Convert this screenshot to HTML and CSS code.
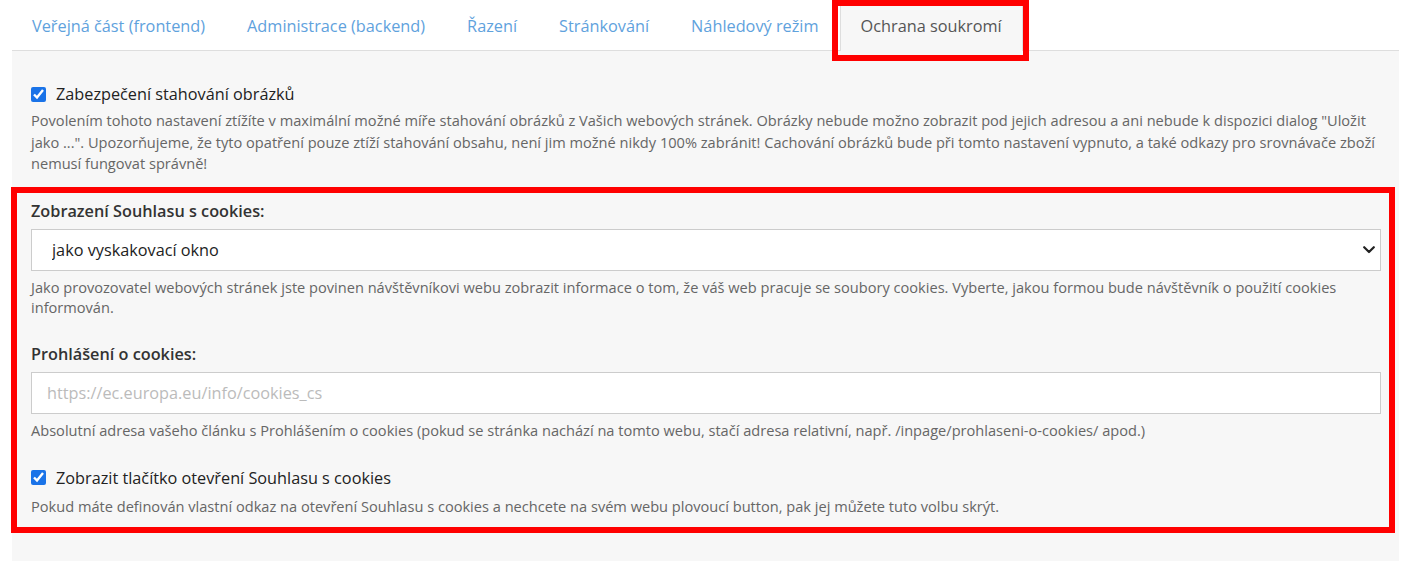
FILE: index.html
```html
<!DOCTYPE html>
<html lang="cs">
<head>
<meta charset="utf-8">
<title>Ochrana soukromí</title>
<link rel="stylesheet" href="styles.css">
</head>
<body>
<div class="page">
  <ul class="tabs">
    <li class="tab"><a href="#">Veřejná část (frontend)</a></li>
    <li class="tab"><a href="#">Administrace (backend)</a></li>
    <li class="tab"><a href="#">Řazení</a></li>
    <li class="tab"><a href="#">Stránkování</a></li>
    <li class="tab"><a href="#">Náhledový režim</a></li>
    <li class="tab active"><a href="#">Ochrana soukromí</a></li>
  </ul>
  <div class="panel">
    <label class="check-row">
      <input type="checkbox" class="check" checked>
      <span>Zabezpečení stahování obrázků</span>
    </label>
    <p class="desc">Povolením tohoto nastavení ztížíte v maximální možné míře stahování obrázků z Vašich webových stránek. Obrázky nebude možno zobrazit pod jejich adresou a ani nebude k dispozici dialog "Uložit jako ...". Upozorňujeme, že tyto opatření pouze ztíží stahování obsahu, není jim možné nikdy 100% zabránit! Cachování obrázků bude při tomto nastavení vypnuto, a také odkazy pro srovnávače zboží nemusí fungovat správně!</p>

    <div class="group">
      <label class="field-label" for="mode">Zobrazení Souhlasu s cookies:</label>
      <div class="select-wrap">
        <select id="mode" class="control select">
          <option>jako vyskakovací okno</option>
        </select>
        <svg class="chevron" width="12" height="8" viewBox="0 0 12 8"><path d="M1.2 1.2 L6 6 L10.8 1.2" fill="none" stroke="#222" stroke-width="2.2" stroke-linecap="round" stroke-linejoin="round"/></svg>
      </div>
      <p class="help">Jako provozovatel webových stránek jste povinen návštěvníkovi webu zobrazit informace o tom, že váš web pracuje se soubory cookies. Vyberte, jakou formou bude návštěvník o použití cookies informován.</p>
    </div>

    <div class="group">
      <label class="field-label" for="url">Prohlášení o cookies:</label>
      <input id="url" class="control" type="text" placeholder="https://ec.europa.eu/info/cookies_cs">
      <p class="help">Absolutní adresa vašeho článku s Prohlášením o cookies (pokud se stránka nachází na tomto webu, stačí adresa relativní, např. /inpage/prohlaseni-o-cookies/ apod.)</p>
    </div>

    <div class="group">
      <label class="check-row">
        <input type="checkbox" class="check" checked>
        <span>Zobrazit tlačítko otevření Souhlasu s cookies</span>
      </label>
      <p class="help">Pokud máte definován vlastní odkaz na otevření Souhlasu s cookies a nechcete na svém webu plovoucí button, pak jej můžete tuto volbu skrýt.</p>
    </div>
  </div>
</div>
<div class="mark mark-tab"></div>
<div class="mark mark-form"></div>
</body>
</html>
```

FILE: styles.css
```css
* { box-sizing: border-box; }
html, body { margin: 0; padding: 0; background: #fff; }
body {
  font-family: "Open Sans", "Liberation Sans", sans-serif;
  color: #222;
  position: relative;
  height: 572px;
  overflow: hidden;
}
.page {
  margin-left: 12px;
  width: 1387px;
}
.tabs {
  list-style: none;
  margin: 0;
  padding: 0;
  display: flex;
  border-bottom: 1px solid #dedede;
  height: 51px;
}
.tab { margin-bottom: -1px; }
.tab a {
  display: block;
  padding: 13px 20px 12px;
  font-size: 16.3px;
  line-height: 24px;
  color: #5fa2dd;
  text-decoration: none;
  border: 1px solid transparent;
  border-bottom: 0;
  height: 51px;
}
.tab:first-child a { padding-left: 19px; }
.tab.active a {
  color: #555;
  background: #f7f7f7;
  border-color: #dedede;
}
.panel {
  background: #f7f7f7;
  padding: 31px 18px 44px 19px;
  height: 510px;
}
.check-row {
  display: flex;
  align-items: center;
  gap: 10px;
  font-size: 16.25px;
  line-height: 24px;
  color: #222;
}
.check {
  width: 15px;
  height: 15px;
  margin: 0;
  accent-color: #1a73e8;
}
.desc {
  margin: 4px 0 0;
  font-size: 14.6px;
  line-height: 21.5px;
  color: #666;
}
.group { margin-top: 24px; }
.group + .group { margin-top: 25px; }
.group:last-child { margin-top: 26px; }
.field-label {
  display: block;
  font-size: 16.25px;
  line-height: 24px;
  font-weight: 600;
  color: #333;
  margin-bottom: 6px;
}
.control {
  display: block;
  width: 100%;
  height: 42px;
  border: 1px solid #cccccc;
  background: #fff;
  border-radius: 0;
  font-family: inherit;
  font-size: 16.25px;
  color: #222;
  padding: 0 15px;
  outline: none;
}
.control::placeholder { color: #bbb; }
.select-wrap { position: relative; }
.select {
  appearance: none;
  -webkit-appearance: none;
  padding-left: 20px;
}
.chevron {
  position: absolute;
  right: 6px;
  top: 17px;
  pointer-events: none;
}
.help {
  margin: 6px 0 0;
  font-size: 14.6px;
  line-height: 20px;
  color: #666;
}
.mark {
  position: absolute;
  border: 6px solid #ff0000;
  pointer-events: none;
}
.mark-tab {
  left: 832px;
  top: 0;
  width: 197px;
  height: 61px;
}
.mark-form {
  left: 11px;
  top: 187px;
  width: 1384px;
  height: 346px;
}
```
